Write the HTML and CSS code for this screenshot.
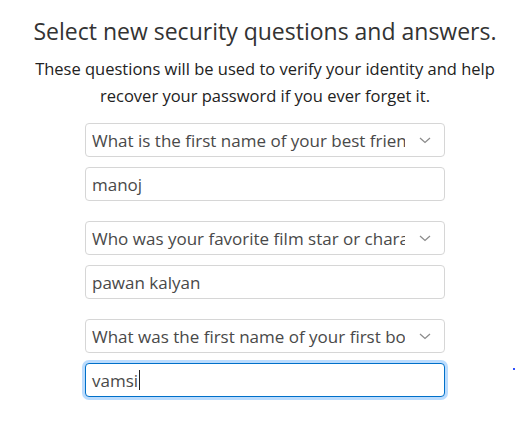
FILE: index.html
```html
<!DOCTYPE html>
<html>
<head>
<meta charset="utf-8">
<link rel="stylesheet" href="styles.css">
</head>
<body>
<div class="page">
  <h1 class="title">Select new security questions and answers.</h1>
  <p class="intro">These questions will be used to verify your identity and help<br>recover your password if you ever forget it.</p>
  <div class="form">
    <div class="group">
      <div class="select"><span class="select-text">What is the first name of your best friend in high school?</span>
        <svg class="chev" width="12" height="7" viewBox="0 0 12 7"><path d="M1 1l5 4.5L11 1" fill="none" stroke="#8c8c8c" stroke-width="1.3"/></svg></div>
      <div class="field">manoj</div>
    </div>
    <div class="group">
      <div class="select"><span class="select-text">Who was your favorite film star or character in school?</span>
        <svg class="chev" width="12" height="7" viewBox="0 0 12 7"><path d="M1 1l5 4.5L11 1" fill="none" stroke="#8c8c8c" stroke-width="1.3"/></svg></div>
      <div class="field">pawan kalyan</div>
    </div>
    <div class="group">
      <div class="select"><span class="select-text">What was the first name of your first boss?</span>
        <svg class="chev" width="12" height="7" viewBox="0 0 12 7"><path d="M1 1l5 4.5L11 1" fill="none" stroke="#8c8c8c" stroke-width="1.3"/></svg></div>
      <div class="field focus">vamsi<span class="caret"></span></div>
    </div>
  </div>
  <span class="dot"></span>
</div>
</body>
</html>
```
FILE: styles.css
```css
html, body { margin: 0; padding: 0; background: #fff; }
body { font-family: "Open Sans", "Liberation Sans", Arial, sans-serif; color: #333; }
.page { position: relative; width: 500px; margin-left: 15px; padding-top: 17px; text-align: center; height: 405px; }
.title { margin: 0; font-size: 23px; line-height: 28px; font-weight: normal; color: #333; }
.intro { margin: 10px -10px 0; font-size: 16.5px; line-height: 27px; color: #222; }
.form { width: 360px; margin: 14px 0 0 70px; display: flex; flex-direction: column; gap: 20px; text-align: left; }
.group { display: flex; flex-direction: column; gap: 10px; }
.select, .field { box-sizing: border-box; height: 34px; border: 1px solid #d6d6d6; border-radius: 4px; background: #fff; display: flex; align-items: center; padding: 0 12px 0 6px; font-size: 17px; color: #494949; }
.select-text { flex: 1; overflow: hidden; white-space: nowrap; margin-right: 14px; }
.chev { flex: none; margin-right: 1px; }
.field.focus { border-color: #0070c9; box-shadow: 0 0 0 3px rgba(131, 192, 253, 0.55); }
.caret { display: inline-block; width: 1px; height: 20px; background: #222; margin-left: 1px; }
.dot { position: absolute; left: 498px; top: 368px; width: 2px; height: 2px; background: #3050ff; }
```
